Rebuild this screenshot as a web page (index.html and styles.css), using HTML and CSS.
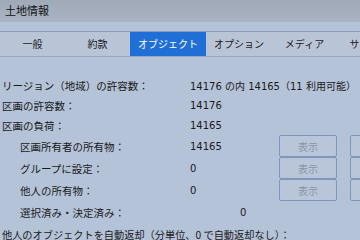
FILE: index.html
```html
<!DOCTYPE html>
<html lang="ja">
  <head>
    <meta charset="UTF-8" />
    <title>土地情報</title>
    <link rel="stylesheet" href="styles.css">
  </head>
  <body>
    <header class="titlebar">土地情報</header>
    <nav class="tabs">
      <div class="tab">一般</div>
      <div class="tab">約款</div>
      <div class="tab active">オブジェクト</div>
      <div class="tab">オプション</div>
      <div class="tab">メディア</div>
      <div class="tab">サウンド</div>
    </nav>
    <main class="panel">
      <div class="row">
        <span class="label">リージョン（地域）の許容数：</span>
        <span class="value">14176 の内 14165（11 利用可能）</span>
      </div>
      <div class="row">
        <span class="label">区画の許容数：</span>
        <span class="value">14176</span>
      </div>
      <div class="row">
        <span class="label">区画の負荷：</span>
        <span class="value">14165</span>
      </div>
      <div class="row tall sub">
        <span class="label">区画所有者の所有物：</span>
        <span class="value">14165</span>
        <button class="btn" disabled>表示</button>
        <button class="btn" disabled>返却</button>
      </div>
      <div class="row tall sub">
        <span class="label">グループに設定：</span>
        <span class="value">0</span>
        <button class="btn" disabled>表示</button>
        <button class="btn" disabled>返却</button>
      </div>
      <div class="row tall sub">
        <span class="label">他人の所有物：</span>
        <span class="value">0</span>
        <button class="btn" disabled>表示</button>
        <button class="btn" disabled>返却</button>
      </div>
      <div class="row tall sub">
        <span class="label">選択済み・決定済み：</span>
        <span class="value selected">0</span>
      </div>
      <div class="row tall">
        <span class="label wide">他人のオブジェクトを自動返却（分単位、0 で自動返却なし）：</span>
      </div>
    </main>
  </body>
</html>
```

FILE: styles.css
```css
body {
  margin: 0;
  width: 360px;
  height: 240px;
  overflow: hidden;
  background-color: #b5c3d9;
  font-family: "Noto Sans CJK JP", sans-serif;
  font-size: 10.5px;
  color: #1a1a1a;
}
.titlebar {
  height: 22px;
  line-height: 21px;
  padding-left: 5px;
  background: linear-gradient(#9fa9b8, #a9b3c2);
  font-size: 11px;
  color: #111;
}
.tabs {
  display: flex;
  margin-top: 9px;
  height: 24px;
  border-top: 1px solid #8e9bb0;
  border-bottom: 1px solid #98a8bf;
  background-color: #b9c5d7;
  white-space: nowrap;
}
.tab {
  min-width: 65px;
  padding: 0 8px;
  box-sizing: border-box;
  text-align: center;
  line-height: 24px;
  font-size: 10px;
  flex-shrink: 0;
}
.tab.active {
  background-color: #1f6fd6;
  color: white;
}
.panel {
  padding-top: 18px;
}
.row {
  display: flex;
  align-items: center;
  height: 20px;
  white-space: nowrap;
}
.row.tall {
  height: 22px;
}
.label {
  width: 190px;
  padding-left: 2px;
  box-sizing: border-box;
  flex-shrink: 0;
}
.sub .label {
  padding-left: 20px;
}
.label.wide {
  width: auto;
  font-size: 10.2px;
}
.value {
  width: 89px;
  flex-shrink: 0;
  font-family: "DejaVu Sans", "Noto Sans CJK JP", sans-serif;
  font-size: 10px;
}
.value.selected {
  padding-left: 50px;
}
.btn {
  width: 58px;
  height: 22px;
  margin-right: 13px;
  flex-shrink: 0;
  padding: 0;
  border: 1px solid #7e96ba;
  border-radius: 2px;
  background-color: #b9c6da;
  color: #8793a6;
  font-family: "Noto Sans CJK JP", sans-serif;
  font-size: 10px;
}
```
